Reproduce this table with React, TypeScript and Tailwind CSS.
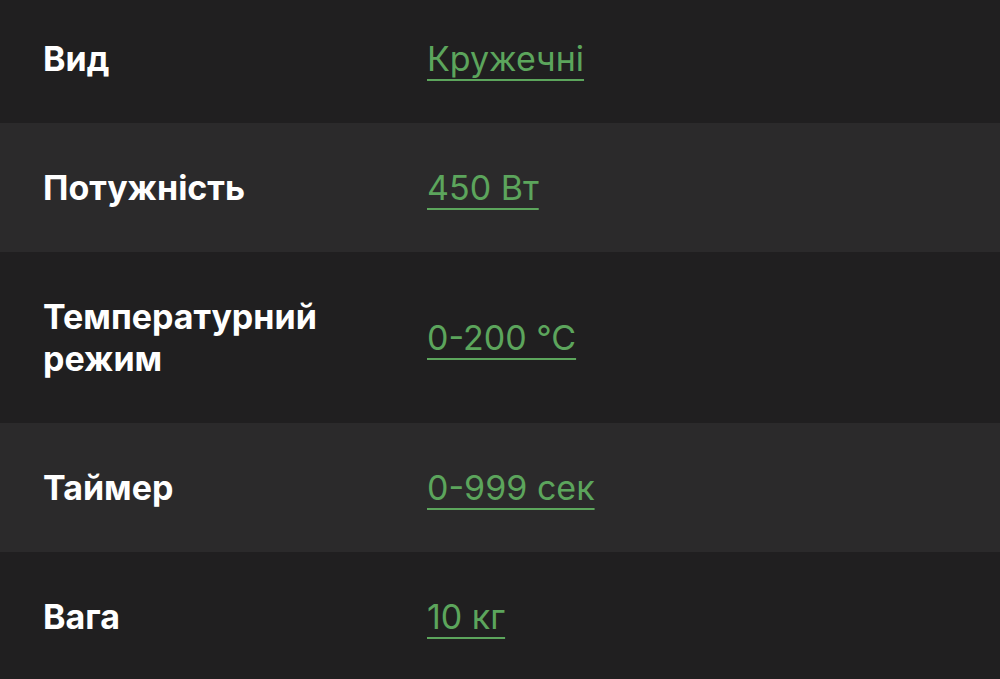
const rows = [
  { label: "Вид", value: "Кружечні", first: true },
  { label: "Потужність", value: "450 Вт" },
  { label: "Температурний режим", value: "0-200 °C" },
  { label: "Таймер", value: "0-999 сек" },
  { label: "Вага", value: "10 кг" },
]

export default function App() {
  return (
    <div className="w-[1000px] h-[679px] overflow-hidden bg-[#201f20] font-['Inter',sans-serif]">
      {rows.map((row, i) => (
        <div
          key={row.label}
          className={
            "flex items-center pl-[43px] " +
            (i % 2 === 1 ? "bg-[#2b2a2b] " : "bg-[#201f20] ") +
            (row.first ? "pt-[38px] pb-[43px]" : "py-[43.5px]")
          }
        >
          <div className="w-[384px] shrink-0 pr-[40px] text-[34px] leading-[42px] font-bold text-white">
            {row.label}
          </div>
          <a
            href="#"
            className="text-[34px] leading-[42px] text-[#5ca55c] underline decoration-2 underline-offset-[8px]"
          >
            {row.value}
          </a>
        </div>
      ))}
    </div>
  )
}
